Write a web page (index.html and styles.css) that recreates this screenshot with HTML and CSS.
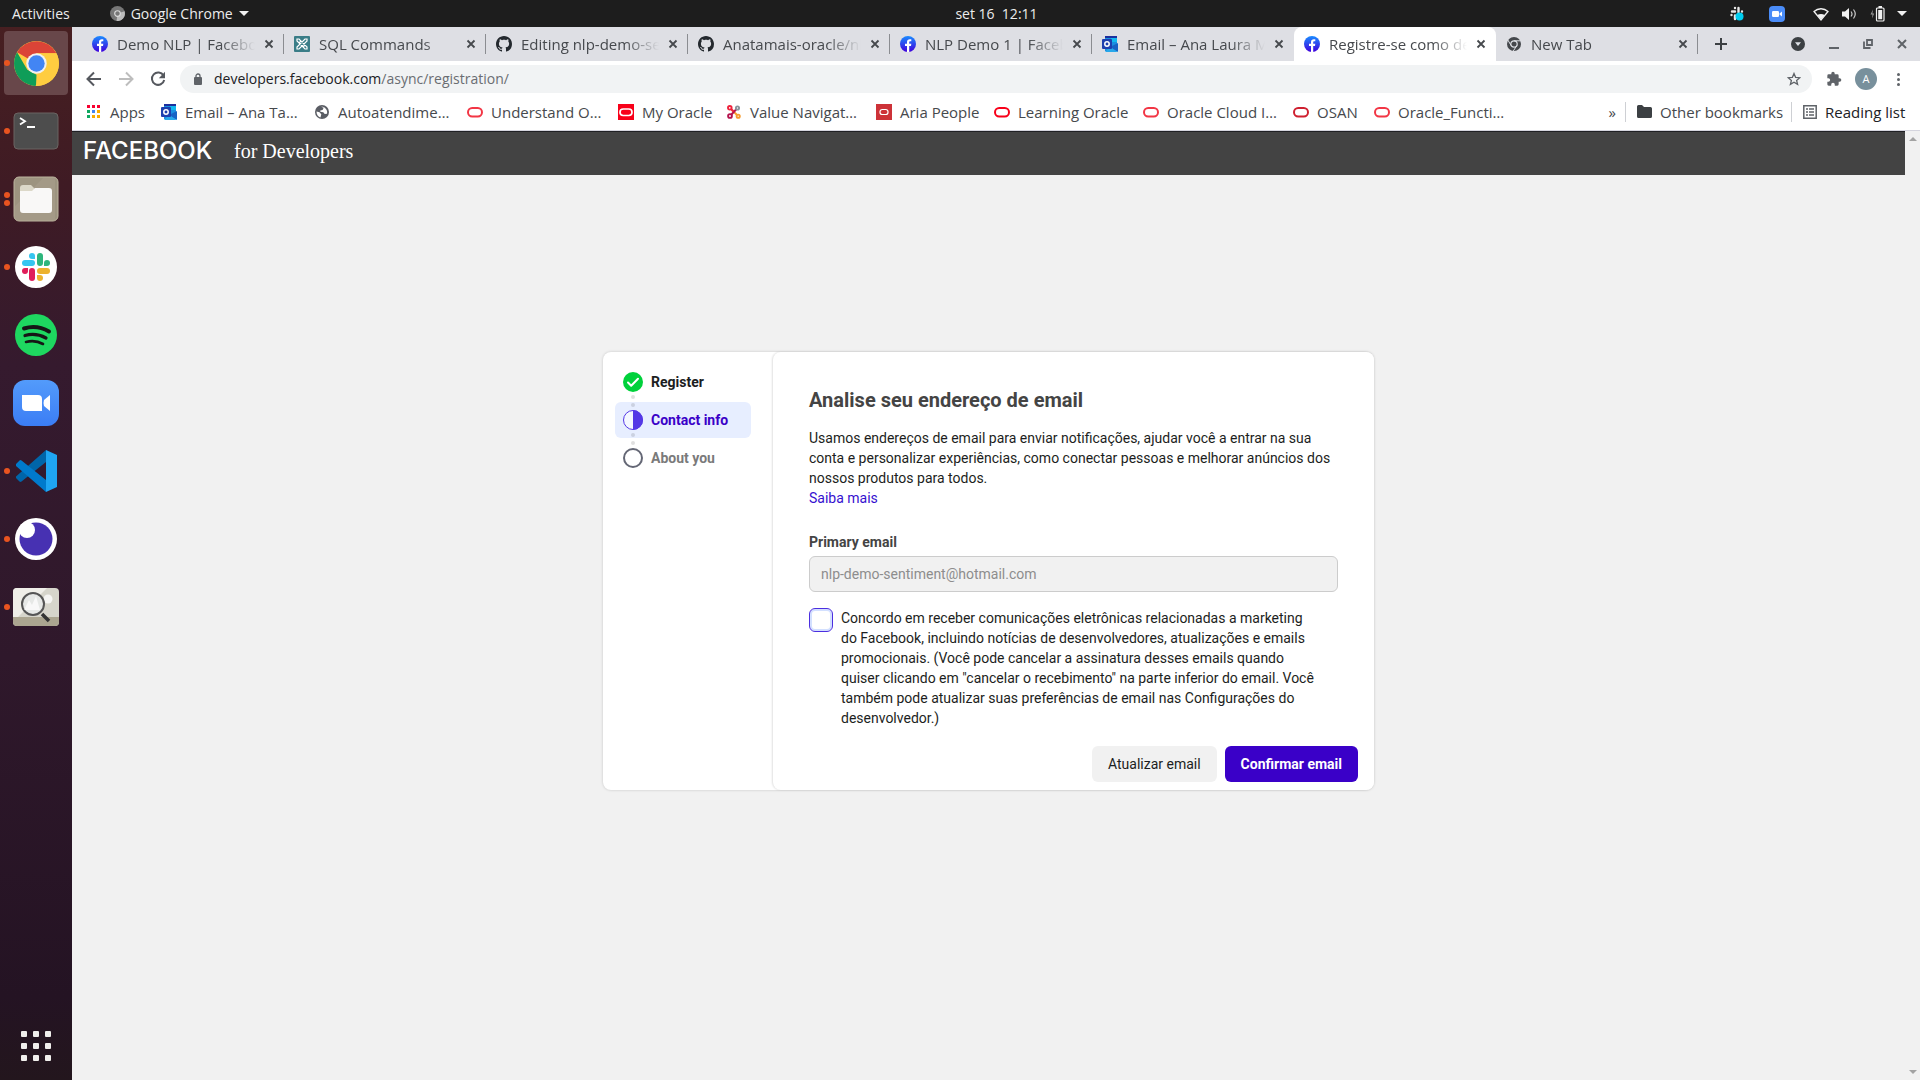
FILE: index.html
```html
<!DOCTYPE html>
<html lang="pt-BR">
<head>
<meta charset="utf-8">
<title>Registre-se como desenvolvedor</title>
<link rel="stylesheet" href="styles.css">
</head>
<body>
<svg class="sprite" aria-hidden="true">
  <defs>
    <linearGradient id="fbg" x1="0" y1="0" x2="0" y2="1"><stop offset="0" stop-color="#1a8cff"/><stop offset="1" stop-color="#4000dc"/></linearGradient>
    <linearGradient id="zmg" x1="0" y1="0" x2="0" y2="1"><stop offset="0" stop-color="#539bfb"/><stop offset="1" stop-color="#3b7df5"/></linearGradient>
  </defs>
  <symbol id="facebook" viewBox="0 0 16 16"><circle cx="8" cy="8" r="8" fill="url(#fbg)"/><path d="M7 16V10H5V7.8h2V6.1C7 4.1 8.100 3.200 9.800 3.200l1.500.1v1.900h-.9c-.9 0-1.200.5-1.200 1.100v1.500h2.100L11 10H9.200v6z" fill="#fff"/></symbol>
  <symbol id="sql" viewBox="0 0 16 16"><rect width="16" height="16" rx="1" fill="#3a7d87"/><g fill="none" stroke="#fff" stroke-width="1.200"><path d="M3 5V3h2l8 8v2h-2zM13 5V3h-2L3 11v2h2z"/><path d="M5 7l2-2M9 11l2-2"/></g></symbol>
  <symbol id="github" viewBox="0 0 16 16"><path fill="#24292e" d="M8 0C3.580 0 0 3.580 0 8c0 3.540 2.290 6.530 5.470 7.590.4.070.55-.17.55-.38 0-.19-.01-.82-.01-1.490-2.010.37-2.530-.49-2.690-.94-.09-.23-.48-.94-.82-1.130-.28-.15-.68-.52-.01-.53.63-.01 1.080.58 1.230.82.72 1.210 1.870.87 2.330.66.07-.52.28-.87.51-1.070-1.780-.2-3.640-.89-3.640-3.950 0-.87.31-1.590.82-2.150-.08-.2-.36-1.020.08-2.120 0 0 .67-.21 2.200.82.64-.18 1.320-.27 2-.27s1.360.09 2 .27c1.530-1.040 2.200-.82 2.200-.82.44 1.100.16 1.920.08 2.120.51.56.82 1.270.82 2.150 0 3.070-1.870 3.750-3.650 3.950.29.25.54.73.54 1.480 0 1.070-.01 1.930-.01 2.200 0 .21.15.46.55.38A8.010 8.010 0 0 0 16 8c0-4.420-3.580-8-8-8z"/></symbol>
  <symbol id="outlook" viewBox="0 0 16 16"><path fill="#1a8fe0" d="M3 1h12v14H3z"/><path fill="#1b2f9e" d="M3 0h12v2H3z"/><path fill="#12b8f0" d="M9 2h6v4H9z"/><path fill="#1762c4" d="M16 7v9l-8-5z"/><path fill="#28a8ea" d="M3 16l5-5 8 5z"/><rect y="3" width="10" height="10" rx="1" fill="#1d3fae"/><circle cx="5" cy="8" r="2.200" fill="none" stroke="#fff" stroke-width="1.500"/></symbol>
  <symbol id="chromegray" viewBox="0 0 16 16"><circle cx="8" cy="8" r="7" fill="#45484c"/><circle cx="8" cy="8" r="3.200" fill="#45484c" stroke="#dee1e6" stroke-width="1.200"/><path d="M8 4.800h7M5.200 9.600L1.800 4M10.800 9.600L7.300 15" stroke="#dee1e6" stroke-width="1"/></symbol>
  <symbol id="chrome" viewBox="0 0 44 44"><circle cx="22" cy="22" r="22" fill="#ffcd40"/><path d="M22 22L3 11A22 22 0 0 1 41.500 12H22z" fill="#db4437"/><path d="M3 11l10 17 9 5-.5 11A22 22 0 0 1 3 11z" fill="#0f9d58"/><path d="M30 27l-9 17h1A22 22 0 0 0 41.500 12H22z" fill="#ffcd40"/><circle cx="22" cy="22" r="10" fill="#f1f1f1"/><circle cx="22" cy="22" r="8" fill="#4285f4"/></symbol>
  <symbol id="close" viewBox="0 0 10 10"><path d="M1.500 1.500l7 7M8.500 1.500l-7 7" stroke="#46494d" stroke-width="1.800"/></symbol>
  <symbol id="globe" viewBox="0 0 16 16"><circle cx="8" cy="8" r="7" fill="#5a5d64"/><path d="M2.500 7.500l3 .8 1.800 2-.8 3.200c-2.300-.8-4-2.800-4-6zM7 2.800l2.600 1-1 2.200-2.300.6v1.200l3 .5 1.400 1.800 2.300-.4c.8-2.800-1-6-4.300-7z" fill="#fff"/></symbol>
  <symbol id="oracle" viewBox="0 0 16 16"><rect x="1" y="4" width="14" height="8.500" rx="4.200" fill="none" stroke="currentColor" stroke-width="2"/></symbol>
  <symbol id="oraclebox" viewBox="0 0 16 16"><path fill="#f80019" d="M0 0h16v16H0z"/><rect x="2" y="5" width="12" height="6.500" rx="3.200" fill="none" stroke="#fff" stroke-width="1.700"/></symbol>
  <symbol id="aria" viewBox="0 0 16 16"><path fill="#cd3238" d="M0 0h16v16H0z"/><rect x="4" y="5.500" width="8" height="5" rx="2.300" fill="none" stroke="#fff" stroke-width="1.200"/></symbol>
  <symbol id="value" viewBox="0 0 16 16"><g fill="none" stroke-width="1.900"><path d="M6 6l5 5" stroke="#f79b2e"/><path d="M5 11L10.500 5" stroke="#b5124d"/><path d="M5 5l2.500 2.500" stroke="#ef233c"/><circle cx="3.800" cy="3.800" r="1.800" stroke="#ef233c"/><circle cx="11.500" cy="4" r="1.600" stroke="#8a949c"/><circle cx="4" cy="12" r="1.900" stroke="#b5124d"/><circle cx="12.200" cy="12.200" r="1.600" stroke="#f79b2e"/></g></symbol>
  <symbol id="slack" viewBox="0 0 28 28"><g stroke-width="6" stroke-linecap="round"><path d="M3 10h7" stroke="#36c5f0"/><path d="M18 3v7" stroke="#2eb67d"/><path d="M18 18h7" stroke="#ecb22e"/><path d="M10 18v7" stroke="#e01e5a"/></g><path fill="#36c5f0" d="M13 6H10a3 3 0 1 1 3-3z"/><path fill="#2eb67d" d="M22 13v-3a3 3 0 1 1 3 3z"/><path fill="#ecb22e" d="M15 22h3a3 3 0 1 1-3 3z"/><path fill="#e01e5a" d="M6 15v3a3 3 0 1 1-3-3z"/></symbol>
</svg>

<header class="topbar">
  <div class="topbar-left">
    <span>Activities</span>
    <span class="app-menu"><svg width="15" height="15" viewBox="0 0 16 16"><circle cx="8" cy="8" r="8" fill="#777"/><path d="M8 8L15.500 5.500A8 8 0 0 1 7 16z" fill="#bbb"/><circle cx="8" cy="8" r="3" fill="#777" stroke="#ddd" stroke-width="1.200"/></svg>Google Chrome<i class="caret"></i></span>
  </div>
  <time class="clock">set 16&nbsp; 12:11</time>
  <div class="tray">
    <svg class="tray-slack" width="16" height="16" viewBox="0 0 16 16"><g stroke="#e8e8e8" stroke-width="2.400" stroke-linecap="round"><path d="M3 5.500h3M6 2v.1M9.500 2v4M13 5.500v.1M2.500 9v.1M6 9.500V13"/></g><circle cx="10.500" cy="10.500" r="4" fill="#00cdf0"/></svg>
    <svg class="tray-zoom" width="16" height="16" viewBox="0 0 16 16"><rect width="16" height="16" rx="4" fill="#4a8cf8"/><rect x="3" y="5" width="7" height="6" rx="1.200" fill="#fff"/><path d="M10.500 7.500l2.500-2v5l-2.500-2z" fill="#fff"/></svg>
    <svg width="16" height="14" viewBox="0 0 16 14"><path d="M1 4.500C5 .8 11 .8 15 4.500L8 13z" fill="none" stroke="#f1f1f1" stroke-width="1.300"/><path d="M4.200 8C6.500 6.600 9.500 6.600 11.800 8L8 12.600z" fill="#f1f1f1"/></svg>
    <svg width="16" height="14" viewBox="0 0 16 14"><path d="M1 4.500h3l4-3.500v12L4 9.500H1z" fill="#f1f1f1"/><path d="M10 4.500q2 2.500 0 5M12.500 2.500q3.500 4.500 0 9" fill="none" stroke="#ccc" stroke-width="1.200"/></svg>
    <svg width="16" height="16" viewBox="0 0 16 16"><path d="M4 3.500L1.500 8.500h2L3 12.500 5.200 7.500H3.400z" fill="#999"/><rect x="7.500" y="2" width="7.500" height="13" rx="1" fill="none" stroke="#f1f1f1" stroke-width="1.200"/><path d="M9.200 4h4v9.200h-4zM9.500 0h3.500v2H9.500z" fill="#f1f1f1"/></svg>
    <i class="caret"></i>
  </div>
</header>

<div class="desktop">
  <nav class="dock" aria-label="Dock">
    <ul class="dock-list">
      <li class="dock-item current"><i class="run"></i><svg width="45" height="45"><use href="#chrome"/></svg></li>
      <li class="dock-item"><i class="run"></i><svg width="46" height="38" viewBox="0 0 46 38"><rect x="1" y="1" width="44" height="36" rx="4" fill="#4d4d4d" stroke="#6b6462"/><path d="M7 6l5 3.200-5 3.200M14 15h8" fill="none" stroke="#fff" stroke-width="1.800"/></svg></li>
      <li class="dock-item"><i class="run double"></i><svg width="46" height="46" viewBox="0 0 46 46"><rect x="1" y="1" width="44" height="44" rx="5" fill="#9d9480" stroke="#bdb59f"/><path d="M2 30L30 2h12v42H2z" fill="#a89f8c" opacity=".6"/><path d="M7 12q0-3 3-3h8l4 4v6H7z" fill="#dcd8c8"/><path d="M7 15h12l3-3h14q3 0 3 3v19q0 3-3 3H10q-3 0-3-3z" fill="#f9f8f7"/></svg></li>
      <li class="dock-item"><i class="run"></i><span class="disc"><svg width="28" height="28"><use href="#slack"/></svg></span></li>
      <li class="dock-item"><svg width="42" height="42" viewBox="0 0 42 42"><circle cx="21" cy="21" r="21" fill="#1ed760"/><g fill="none" stroke="#161616" stroke-linecap="round"><path d="M9 14.500q13-4 25 3" stroke-width="4"/><path d="M10 21.500q11-3 21 2.500" stroke-width="3.200"/><path d="M11 28q9-2.500 17 2" stroke-width="2.600"/></g></svg></li>
      <li class="dock-item"><svg width="46" height="46" viewBox="0 0 46 46"><rect width="46" height="46" rx="12" fill="url(#zmg)"/><path d="M9 15h16q4 0 4 4v12H13q-4 0-4-4z" fill="#fff"/><path d="M31 20l6-5v16l-6-5q-1-3 0-6z" fill="#fff"/></svg></li>
      <li class="dock-item"><i class="run"></i><svg width="42" height="42" viewBox="0 0 42 42"><path d="M1 28l3.500 3.500q1 .8 2 0L31 12V0L1 26.500z" fill="#0065a9"/><path d="M1 14l3.500-3.500q1-.8 2 0L31 30v12L1 16z" fill="#007acc"/><path d="M31 0l11 5v32l-11 5z" fill="#1fa5f2"/></svg></li>
      <li class="dock-item"><i class="run"></i><svg width="42" height="42" viewBox="0 0 42 42"><circle cx="21" cy="21" r="21" fill="#fff"/><circle cx="21" cy="21" r="16.500" fill="#4731b2"/><circle cx="12" cy="12" r="8" fill="#fff"/></svg></li>
      <li class="dock-item"><i class="run"></i><svg width="46" height="38" viewBox="0 0 46 38"><rect width="46" height="38" rx="4" fill="#d6d5cb"/><path d="M0 29h46v5q0 4-4 4H4q-4 0-4-4z" fill="#aba590"/><path d="M4 0h30L5 29H0V4q0-4 4-4z" fill="#efeee8"/><circle cx="35" cy="11" r="4.500" fill="#f5f5f3"/><circle cx="20" cy="16" r="11" fill="#e6e8e6" stroke="#555" stroke-width="2"/><path d="M11 22l5-10 3 5 4-9 4 14z" fill="#fff" opacity=".7"/><path d="M29 26l7 7" stroke="#333" stroke-width="3.500"/></svg></li>
    </ul>
    <button class="show-apps" aria-label="Show Applications"><i></i><i></i><i></i><i></i><i></i><i></i><i></i><i></i><i></i></button>
  </nav>

  <section class="browser">
    <div class="tabstrip">
      <div class="tab"><svg class="ico"><use href="#facebook"/></svg><span class="tab-title">Demo NLP | Faceboo</span><svg class="x"><use href="#close"/></svg></div>
      <div class="tab"><svg class="ico"><use href="#sql"/></svg><span class="tab-title">SQL Commands</span><svg class="x"><use href="#close"/></svg></div>
      <div class="tab"><svg class="ico"><use href="#github"/></svg><span class="tab-title">Editing nlp-demo-sen</span><svg class="x"><use href="#close"/></svg></div>
      <div class="tab"><svg class="ico"><use href="#github"/></svg><span class="tab-title">Anatamais-oracle/nl</span><svg class="x"><use href="#close"/></svg></div>
      <div class="tab"><svg class="ico"><use href="#facebook"/></svg><span class="tab-title">NLP Demo 1 | Facebo</span><svg class="x"><use href="#close"/></svg></div>
      <div class="tab plain"><svg class="ico"><use href="#outlook"/></svg><span class="tab-title">Email – Ana Laura M</span><svg class="x"><use href="#close"/></svg></div>
      <div class="tab active"><svg class="ico"><use href="#facebook"/></svg><span class="tab-title">Registre-se como de</span><svg class="x"><use href="#close"/></svg></div>
      <div class="tab"><svg class="ico"><use href="#chromegray"/></svg><span class="tab-title">New Tab</span><svg class="x"><use href="#close"/></svg></div>
      <button class="new-tab" aria-label="New tab"><svg width="12" height="12" viewBox="0 0 12 12"><path d="M6 0v12M0 6h12" stroke="#3c4043" stroke-width="2"/></svg></button>
      <div class="window-controls">
        <svg width="14" height="14" viewBox="0 0 14 14"><circle cx="7" cy="7" r="7" fill="#3c4043"/><path d="M4 5.200h6L7 9z" fill="#dee1e6"/></svg>
        <svg width="10" height="14" viewBox="0 0 10 14"><path d="M0 11h10" stroke="#5f6368" stroke-width="2"/></svg>
        <svg width="10" height="10" viewBox="0 0 10 10"><path d="M4 1h5v5H4zM1 2.500V9h6.500" fill="none" stroke="#5f6368" stroke-width="1.800"/></svg>
        <svg width="10" height="10" viewBox="0 0 10 10"><path d="M1 1l8 8M9 1L1 9" stroke="#5f6368" stroke-width="2"/></svg>
      </div>
    </div>

    <div class="toolbar">
      <div class="nav-buttons">
        <svg width="16" height="16" viewBox="0 0 16 16"><path d="M15 8H2M8 1.500L1.500 8 8 14.500" fill="none" stroke="#55585e" stroke-width="2"/></svg>
        <svg width="16" height="16" viewBox="0 0 16 16"><path d="M1 8h13M8 1.500L14.500 8 8 14.500" fill="none" stroke="#bdbdbd" stroke-width="2"/></svg>
        <svg width="16" height="16" viewBox="0 0 16 16"><path d="M13.500 4.500A6.200 6.200 0 1 0 14.200 9" fill="none" stroke="#55585e" stroke-width="2"/><path d="M15 .8v6.400H8.800z" fill="#55585e"/></svg>
      </div>
      <div class="omnibox">
        <svg width="10" height="12" viewBox="0 0 10 12"><rect x="1" y="4" width="8" height="8" rx="1" fill="#5f6368"/><path d="M3 5V3a2 2 0 0 1 4 0v2" fill="none" stroke="#5f6368" stroke-width="1.300"/></svg>
        <span class="url">developers.facebook.com<span class="path">/async/registration/</span></span>
        <svg width="14" height="14" viewBox="0 0 14 14"><path d="M7 1.500l1.600 3.800 4.200.4-3.200 2.700 1 4L7 10.200l-3.600 2.200 1-4L1.200 5.700l4.200-.4z" fill="none" stroke="#5f6368" stroke-width="1.300"/></svg>
      </div>
      <svg class="puzzle" width="16" height="16" viewBox="0 0 24 24"><path fill="#5f6368" d="M20.500 11H19V7a2 2 0 0 0-2-2h-4V3.500a2.500 2.500 0 0 0-5 0V5H4a2 2 0 0 0-2 2v3.800h1.500a2.700 2.700 0 0 1 0 5.400H2V20a2 2 0 0 0 2 2h3.800v-1.500a2.700 2.700 0 0 1 5.400 0V22H17a2 2 0 0 0 2-2v-4h1.500a2.500 2.500 0 0 0 0-5z"/></svg>
      <span class="avatar">A</span>
      <span class="dots"><i></i><i></i><i></i></span>
    </div>

    <div class="bookmarks">
      <ul class="bookmark-list">
        <li><span class="apps-icon"><i></i><i></i><i></i><i></i><i></i><i></i><i></i><i></i><i></i></span>Apps</li>
        <li><svg class="ico"><use href="#outlook"/></svg>Email – Ana Ta…</li>
        <li><svg class="ico"><use href="#globe"/></svg>Autoatendime…</li>
        <li><svg class="ico red"><use href="#oracle"/></svg>Understand O…</li>
        <li><svg class="ico"><use href="#oraclebox"/></svg>My Oracle</li>
        <li><svg class="ico"><use href="#value"/></svg>Value Navigat…</li>
        <li><svg class="ico"><use href="#aria"/></svg>Aria People</li>
        <li><svg class="ico bright"><use href="#oracle"/></svg>Learning Oracle</li>
        <li><svg class="ico red"><use href="#oracle"/></svg>Oracle Cloud I…</li>
        <li><svg class="ico dark"><use href="#oracle"/></svg>OSAN</li>
        <li><svg class="ico red"><use href="#oracle"/></svg>Oracle_Functi…</li>
      </ul>
      <span class="more">»</span>
      <span class="bookmark-end other"><svg width="15" height="13" viewBox="0 0 15 13"><path d="M0 1.500Q0 0 1.500 0H5l2 2h6.500Q15 2 15 3.500v8q0 1.500-1.500 1.500h-12Q0 13 0 11.500z" fill="#3c4043"/></svg>Other bookmarks</span>
      <span class="bookmark-end reading"><svg width="14" height="14" viewBox="0 0 14 14"><path d="M.8.8h12.400v12.400H.8z" fill="none" stroke="#5f6368" stroke-width="1.500"/><path d="M3 4h2M6 4h5M3 7h2M6 7h5M3 10h2M6 10h5" stroke="#5f6368" stroke-width="1.400"/></svg>Reading list</span>
    </div>

    <div class="viewport">
      <div class="page">
        <header class="site-header"><span class="wordmark">FACEBOOK</span><span class="product">for Developers</span></header>
        <main class="card">
          <ol class="steps">
            <li class="step done"><svg width="20" height="20" viewBox="0 0 20 20"><circle cx="10" cy="10" r="10" fill="#00d13b"/><path d="M5 10.500l3.200 3.200L15 6.800" fill="none" stroke="#fff" stroke-width="2" stroke-linecap="round" stroke-linejoin="round"/></svg>Register<span class="link-dots"></span></li>
            <li class="step now"><svg width="20" height="20" viewBox="0 0 20 20"><circle cx="10" cy="10" r="9.500" fill="#f4f7ff" stroke="#5438e6"/><path d="M10 0a10 10 0 0 1 0 20z" fill="#5438e6"/></svg>Contact info<span class="link-dots"></span></li>
            <li class="step todo"><svg width="20" height="20" viewBox="0 0 20 20"><circle cx="10" cy="10" r="9" fill="#fff" stroke="#646775" stroke-width="2"/></svg>About you</li>
          </ol>
          <form class="panel">
            <h1>Analise seu endereço de email</h1>
            <p>Usamos endereços de email para enviar notificações, ajudar você a entrar na sua conta e personalizar experiências, como conectar pessoas e melhorar anúncios dos nossos produtos para todos.<br><a href="#">Saiba mais</a></p>
            <label class="field-label" for="email">Primary email</label>
            <input class="field" id="email" type="email" value="nlp-demo-sentiment@hotmail.com" disabled>
            <div class="consent">
              <input class="box" id="consent" type="checkbox">
              <label for="consent">Concordo em receber comunicações eletrônicas relacionadas a marketing do Facebook, incluindo notícias de desenvolvedores, atualizações e emails promocionais. (Você pode cancelar a assinatura desses emails quando quiser clicando em "cancelar o recebimento" na parte inferior do email. Você também pode atualizar suas preferências de email nas Configurações do desenvolvedor.)</label>
            </div>
            <div class="actions">
              <button type="button" class="btn">Atualizar email</button>
              <button type="button" class="btn primary">Confirmar email</button>
            </div>
          </form>
        </main>
      </div>
      <div class="scrollbar"><i class="up"></i><i class="down"></i></div>
    </div>
  </section>
</div>
</body>
</html>
```
FILE: styles.css
```css
* { box-sizing: border-box; }
body {
  margin: 0;
  min-height: 100vh;
  display: flex;
  flex-direction: column;
  font: 15px/20px "Open Sans", "Noto Sans", sans-serif;
  color: #46494d;
  background: #f1f1f1;
}
svg { display: block; flex: none; }
ul, ol { list-style: none; margin: 0; padding: 0; }
button { font: inherit; border: 0; padding: 0; background: none; }
.sprite { position: absolute; width: 0; height: 0; }
.ico { width: 16px; height: 16px; }

/* System bar */
.topbar {
  display: grid;
  grid-template-columns: 1fr auto 1fr;
  align-items: center;
  height: 27px;
  padding: 0 13px 0 12px;
  background: #1d1d1d;
  color: #ececec;
  font-size: 14px;
}
.topbar-left, .app-menu, .tray { display: flex; align-items: center; }
.topbar-left { gap: 40px; }
.app-menu { gap: 6px; }
.clock { padding-left: 74px; }
.tray { justify-content: flex-end; gap: 12px; }
.tray-slack { margin-right: 12px; }
.tray-zoom { margin-right: 16px; }
.caret { border: 5px solid transparent; border-top-color: #f1f1f1; border-bottom: 0; }

/* Dock */
.desktop { flex: 1; display: flex; }
.dock {
  flex: none;
  width: 72px;
  display: flex;
  flex-direction: column;
  justify-content: space-between;
  align-items: center;
  padding: 4px 0 19px;
  background: linear-gradient(#471f21, #3f1b24 15%, #351a2e 32%, #2f182b 60%, #241323 92%, #23161d);
}
.dock-list { display: flex; flex-direction: column; gap: 4px; }
.dock-item {
  position: relative;
  width: 64px;
  height: 64px;
  display: grid;
  place-items: center;
  border-radius: 4px;
}
.dock-item.current { background: #68474a; }
.run {
  position: absolute;
  left: 0;
  width: 6px;
  height: 6px;
  border-radius: 50%;
  background: #e95420;
}
.double { margin-top: -8px; box-shadow: 0 8px #e95420; }
.disc { width: 42px; height: 42px; display: grid; place-items: center; border-radius: 50%; background: #fff; }
.show-apps { display: grid; grid-template-columns: repeat(3, 6px); gap: 6px; }
.show-apps i { height: 6px; border-radius: 1px; background: #f0efec; }

/* Tab strip */
.browser { flex: 1; min-width: 0; display: flex; flex-direction: column; background: #fff; }
.tabstrip { display: flex; align-items: stretch; height: 34px; padding: 0 13px 0 10px; background: #dedfe4; }
.tab {
  flex: 0 1 202px;
  min-width: 0;
  display: flex;
  align-items: center;
  gap: 9px;
  padding: 0 10px 1px;
  background: linear-gradient(#8b8d91, #8b8d91) right center / 1px 20px no-repeat;
}
.tab.plain { background: none; }
.tab.active { background: #fff; border-radius: 8px 8px 0 0; }
.tab-title {
  flex: 1;
  overflow: hidden;
  white-space: nowrap;
  -webkit-mask-image: linear-gradient(to right, #000 75%, transparent);
  mask-image: linear-gradient(to right, #000 75%, transparent);
}
.x { width: 10px; height: 10px; }
.new-tab { padding: 0 17px; }
.window-controls { margin-left: auto; display: flex; align-items: center; gap: 24px; }

/* Address bar */
.toolbar { display: flex; align-items: center; height: 36px; padding: 0 20px 0 14px; }
.nav-buttons { display: flex; gap: 16px; width: 94px; }
.omnibox {
  flex: 1;
  display: flex;
  align-items: center;
  gap: 11px;
  height: 28px;
  padding: 0 11px 0 13px;
  border-radius: 14px;
  background: #f1f3f4;
}
.url { flex: 1; color: #202124; font-size: 14px; }
.path { color: #6a6d72; }
.puzzle { margin: 0 13px 0 14px; }
.avatar {
  width: 22px;
  height: 22px;
  border-radius: 50%;
  background: #78909c;
  color: #fff;
  font-size: 11px;
  line-height: 22px;
  text-align: center;
}
.dots { display: grid; gap: 2px; margin-left: 20px; }
.dots i { width: 3px; height: 3px; border-radius: 50%; background: #5f6368; }

/* Bookmarks */
.bookmarks { display: flex; align-items: center; height: 34px; padding: 0 14px 4px; border-bottom: 1px solid #d5d5de; }
.bookmark-list {
  flex: 1;
  display: grid;
  grid-template-columns: 59px 137px 137px 135px 92px 134px 102px 133px 134px 65px 134px;
  gap: 16px;
}
.bookmark-list li, .bookmark-end { display: flex; align-items: center; gap: 8px; white-space: nowrap; }
.red { color: #f23645; }
.bright { color: #f80019; }
.dark { color: #cf2030; }
.apps-icon { display: grid; grid-template-columns: repeat(3, 3px); gap: 2px; padding: 0 2px 0 1px; }
.apps-icon i { height: 3px; background: #f9ab00; }
.apps-icon i:nth-child(-n+3) { background: #f80030; }
.apps-icon i:nth-child(4), .apps-icon i:nth-child(7) { background: #0fa860; }
.apps-icon i:nth-child(5) { background: #4285f4; }
.more { margin-right: 9px; }
.bookmark-end { padding-left: 11px; border-left: 1px solid #ced0d4; }
.other { width: 166px; }
.reading { color: #202124; width: 115px; }

/* Web page */
.viewport { flex: 1; display: flex; background: #f1f1f1; }
.page { flex: 1; min-width: 0; }
.site-header {
  display: flex;
  align-items: center;
  gap: 7px;
  height: 44px;
  padding: 0 11px 5px;
  border-top: 1px solid #202024;
  background: #434343;
  color: #fff;
}
.wordmark { width: 144px; font: 500 24px/28px Inter, sans-serif; }
.product { font: 20px/24px "Liberation Serif", serif; }
.scrollbar { width: 15px; display: flex; flex-direction: column; justify-content: space-between; align-items: center; padding: 6px 0; }
.scrollbar i { border: 4px solid transparent; }
.scrollbar .up { border-top: 0; border-bottom-color: #a3a3a3; }
.scrollbar .down { border-bottom: 0; border-top-color: #a3a3a3; }

.card {
  display: flex;
  max-width: 771px;
  margin: 177px auto 0;
  border-radius: 8px;
  background: #fff;
  box-shadow: 0 0 3px rgba(0, 0, 0, .18);
  font: 14px/20px Roboto, sans-serif;
  color: #1c1e21;
}
.steps { flex: none; width: 170px; padding: 12px; display: flex; flex-direction: column; gap: 2px; }
.step {
  position: relative;
  display: flex;
  align-items: center;
  gap: 8px;
  width: 136px;
  height: 36px;
  padding: 0 8px;
  border-radius: 6px;
  font-weight: 700;
}
.now { background: #e7eeff; color: #3a00c8; }
.todo { color: #7a7a7a; }
.link-dots {
  position: absolute;
  z-index: 1;
  left: 16px;
  top: 31px;
  width: 4px;
  height: 4px;
  border-radius: 50%;
  background: rgba(0, 0, 0, .12);
  box-shadow: 0 8px rgba(0, 0, 0, .12);
}
.panel {
  flex: 1;
  padding: 36px 36px 8px;
  border-radius: 8px;
  background: #fff;
  box-shadow: -1px 0 2px rgba(0, 0, 0, .12);
}
h1 { margin: 0 0 16px; font-size: 20px; line-height: 24px; color: #444; }
p { margin: 0 0 24px; }
a { color: #3510d0; text-decoration: none; }
.field-label { display: block; margin-bottom: 4px; font-weight: 700; color: #444; }
.field {
  display: block;
  width: 100%;
  height: 36px;
  padding: 0 11px;
  border: 1px solid #ccc;
  border-radius: 6px;
  background: #f1f1f1;
  color: #8d8d8d;
  font: inherit;
}
.consent { display: flex; gap: 8px; margin-top: 16px; }
.consent label { width: 476px; }
.box {
  appearance: none;
  flex: none;
  width: 24px;
  height: 24px;
  margin: 0;
  border: 1px solid #4b2ee0;
  border-radius: 6px;
  background: #fff;
  box-shadow: inset 0 0 0 2px #d3e0ff;
}
.actions { display: flex; justify-content: flex-end; gap: 8px; margin: 18px -20px 0 0; }
.btn { height: 36px; padding: 0 16px; border-radius: 6px; background: #f1f1f1; color: #1c1e21; }
.primary { background: #3a00c8; color: #fff; font-weight: 700; }
```
